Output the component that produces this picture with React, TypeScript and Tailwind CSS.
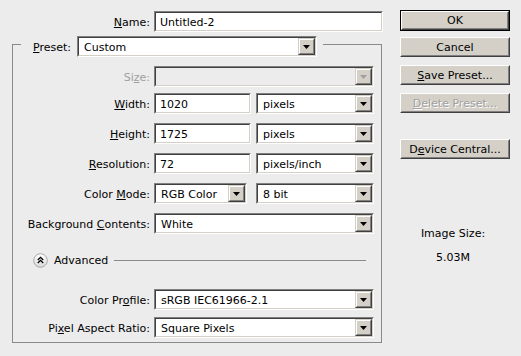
import React from "react";

const Arrow = ({ disabled }: { disabled?: boolean }) => (
  <svg width="7" height="4" viewBox="0 0 7 4">
    <polygon points="0,0 7,0 3.5,4" fill={disabled ? "#a0a0a0" : "#000"} />
  </svg>
);

const DropBtn = ({ disabled }: { disabled?: boolean }) => (
  <div className="ml-auto h-full w-[17px] border border-t-[#d4d0c8] border-l-[#d4d0c8] border-b-[#404040] border-r-[#404040]">
    <div className="h-full w-full border border-t-white border-l-white border-b-[#808080] border-r-[#808080] bg-[#d4d0c8] flex items-center justify-center pt-[1px]">
      <Arrow disabled={disabled} />
    </div>
  </div>
);

const Sunken = ({
  className,
  children,
  disabled,
}: {
  className: string;
  children?: React.ReactNode;
  disabled?: boolean;
}) => (
  <div className={`border border-t-[#808080] border-l-[#808080] border-b-white border-r-white ${className}`}>
    <div
      className={`h-full w-full border border-t-[#404040] border-l-[#404040] border-b-[#d4d0c8] border-r-[#d4d0c8] flex items-center ${
        disabled ? "bg-[#ececec]" : "bg-white"
      }`}
    >
      {children}
    </div>
  </div>
);

const Input = ({ value, className }: { value: string; className: string }) => (
  <Sunken className={className}>
    <span className="pl-[4px] pt-[2px] whitespace-nowrap">{value}</span>
  </Sunken>
);

const Select = ({
  value,
  className,
  disabled,
}: {
  value: string;
  className: string;
  disabled?: boolean;
}) => (
  <Sunken className={className} disabled={disabled}>
    <span className="pl-[5px] pt-[2px] whitespace-nowrap">{value}</span>
    <DropBtn disabled={disabled} />
  </Sunken>
);

const Button = ({
  children,
  className,
  disabled,
}: {
  children: React.ReactNode;
  className: string;
  disabled?: boolean;
}) => (
  <div
    className={`w-[110px] border border-t-white border-l-white border-b-[#404040] border-r-[#404040] ${className}`}
  >
    <div
      className={`h-full w-full border border-t-[#d4d0c8] border-l-[#d4d0c8] border-b-[#808080] border-r-[#808080] bg-[#d4d0c8] flex items-center justify-center ${
        disabled ? "text-[#a0a0a0] [text-shadow:1px_1px_0_#fff]" : "text-black"
      }`}
    >
      {children}
    </div>
  </div>
);

const Label = ({ children, disabled }: { children: React.ReactNode; disabled?: boolean }) => (
  <div className={`w-[137px] pt-[2px] text-right whitespace-nowrap ${disabled ? "text-[#a0a0a0]" : "text-black"}`}>
    {children}
  </div>
);

const AdvIcon = () => (
  <svg width="15" height="15" viewBox="0 0 15 15">
    <defs>
      <linearGradient id="ag" x1="0" y1="0" x2="0" y2="1">
        <stop offset="0" stopColor="#ffffff" />
        <stop offset="1" stopColor="#d8d8d8" />
      </linearGradient>
    </defs>
    <circle cx="7.5" cy="7.5" r="6.8" fill="url(#ag)" stroke="#a8a8a8" strokeWidth="1" />
    <polyline points="4.8,7 7.5,4.3 10.2,7" fill="none" stroke="#000" strokeWidth="1.3" />
    <polyline points="4.8,10 7.5,7.3 10.2,10" fill="none" stroke="#000" strokeWidth="1.3" />
  </svg>
);

export default function App() {
  return (
    <div className="w-[521px] h-[356px] bg-[#ececec] flex font-['DejaVu_Sans',sans-serif] text-[11px] leading-[13px] text-black overflow-hidden">
      {/* left column */}
      <div className="w-[390px] flex flex-col">
        <div className="mt-[11px] h-[21px] flex items-center">
          <div className="w-[150px] pt-[2px] text-right">
            <u>N</u>ame:
          </div>
          <Input value="Untitled-2" className="ml-[4px] w-[229px] h-[21px]" />
        </div>

        <fieldset className="ml-[12px] w-[370px] border border-[#8a8a8a] pb-[4px]">
          <legend className="ml-[8px] pl-[12px] pr-[6px] pt-[4px]">
            <div className="flex items-center">
              <span className="whitespace-nowrap pt-[2px]">
                <u>P</u>reset:
              </span>
              <Select value="Custom" className="ml-[6px] w-[240px] h-[21px]" />
            </div>
          </legend>

          <div className="mt-[9px] flex items-center h-[21px]">
            <Label disabled>
              Si<u>z</u>e:
            </Label>
            <Select value="" disabled className="ml-[4px] w-[220px] h-[21px]" />
          </div>

          <div className="mt-[6px] flex items-center h-[21px]">
            <Label>
              <u>W</u>idth:
            </Label>
            <Input value="1020" className="ml-[4px] w-[97px] h-[21px]" />
            <Select value="pixels" className="ml-[5px] w-[118px] h-[21px]" />
          </div>

          <div className="mt-[9px] flex items-center h-[21px]">
            <Label>
              <u>H</u>eight:
            </Label>
            <Input value="1725" className="ml-[4px] w-[97px] h-[21px]" />
            <Select value="pixels" className="ml-[5px] w-[118px] h-[21px]" />
          </div>

          <div className="mt-[9px] flex items-center h-[21px]">
            <Label>
              <u>R</u>esolution:
            </Label>
            <Input value="72" className="ml-[4px] w-[97px] h-[21px]" />
            <Select value="pixels/inch" className="ml-[5px] w-[118px] h-[21px]" />
          </div>

          <div className="mt-[9px] flex items-center h-[21px]">
            <Label>
              Color <u>M</u>ode:
            </Label>
            <Select value="RGB Color" className="ml-[4px] w-[93px] h-[21px]" />
            <Select value="8 bit" className="ml-[9px] w-[118px] h-[21px]" />
          </div>

          <div className="mt-[9px] flex items-center h-[21px]">
            <Label>
              Background <u>C</u>ontents:
            </Label>
            <Select value="White" className="ml-[4px] w-[220px] h-[21px]" />
          </div>

          <div className="mt-[18px] flex items-center h-[16px]">
            <div className="ml-[20px] flex items-center">
              <AdvIcon />
            </div>
            <span className="ml-[6px] pt-[1px]">Advanced</span>
            <div className="ml-[6px] mr-[15px] flex-1 h-px bg-[#8a8a8a]" />
          </div>

          <div className="mt-[21px] flex items-center h-[21px]">
            <Label>
              Color Pr<u>o</u>file:
            </Label>
            <Select value="sRGB IEC61966-2.1" className="ml-[4px] w-[220px] h-[21px]" />
          </div>

          <div className="mt-[7px] flex items-center h-[21px]">
            <Label>
              Pi<u>x</u>el Aspect Ratio:
            </Label>
            <Select value="Square Pixels" className="ml-[4px] w-[220px] h-[21px]" />
          </div>
        </fieldset>
      </div>

      {/* right column */}
      <div className="ml-[10px] w-[110px] flex flex-col">
        <div className="mt-[10px] h-[21px] w-[110px] border border-black">
          <Button className="h-full w-full">OK</Button>
        </div>
        <Button className="mt-[6px] h-[20px]">Cancel</Button>
        <Button className="mt-[8px] h-[20px]">
          <span>
            <u>S</u>ave Preset...
          </span>
        </Button>
        <Button className="mt-[8px] h-[20px]" disabled>
          <span>
            <u>D</u>elete Preset...
          </span>
        </Button>
        <Button className="mt-[26px] h-[20px]">
          <span>
            D<u>e</u>vice Central...
          </span>
        </Button>
        <div className="mt-[68px] w-[106px] text-center">Image Size:</div>
        <div className="mt-[11px] w-[106px] text-center">5.03M</div>
      </div>
    </div>
  );
}
